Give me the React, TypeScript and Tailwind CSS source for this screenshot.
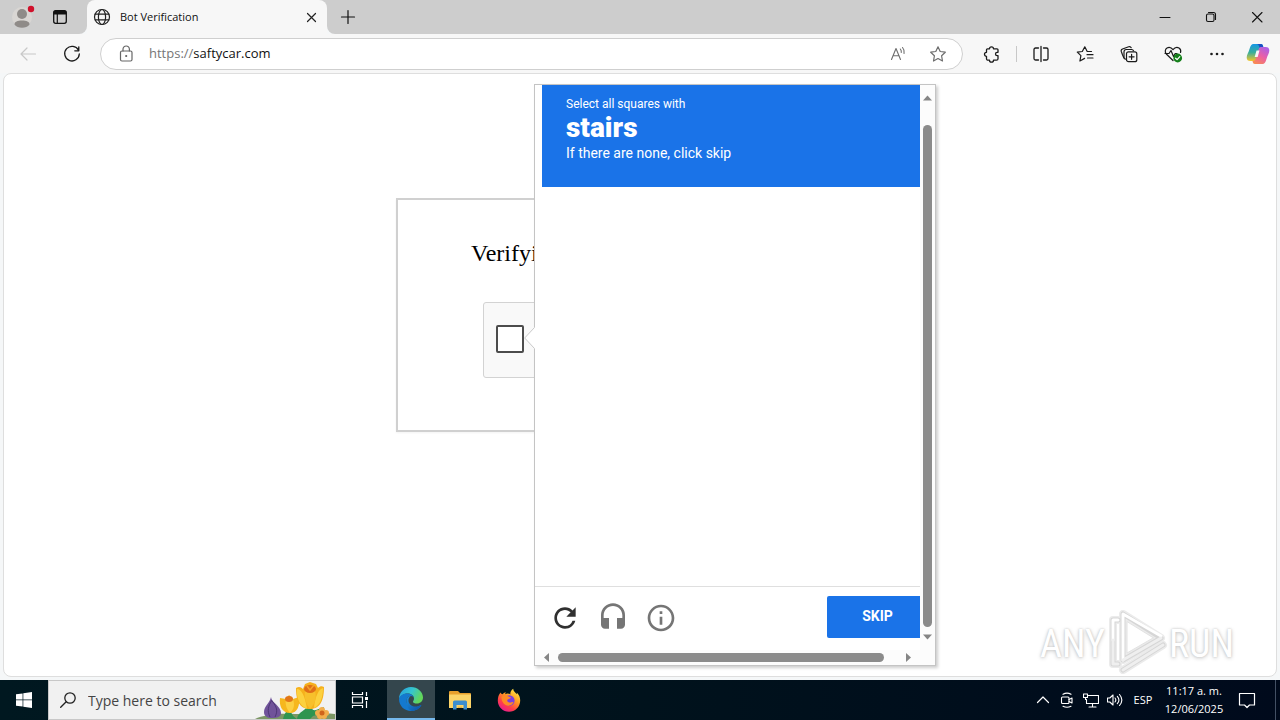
import type { ReactNode } from "react";
import { MdHeadset, MdInfoOutline, MdRefresh } from "react-icons/md";

type IconProps = { className?: string; children: ReactNode; box?: string; width?: number };

function Line({ className = "size-5", children, box = "0 0 20 20", width = 1.2 }: IconProps) {
  return (
    <svg
      className={className}
      viewBox={box}
      fill="none"
      stroke="currentColor"
      strokeWidth={width}
      strokeLinecap="round"
      strokeLinejoin="round"
      aria-hidden="true"
    >
      {children}
    </svg>
  );
}

const STAR = "M10 2.8l2.200 4.700 5.100.7-3.700 3.600.9 5.200-4.500-2.500-4.500 2.500.9-5.200-3.700-3.600 5.100-.7z";

function TabStrip() {
  return (
    <header className="flex h-[34px] shrink-0">
      <div className="flex w-[87px] shrink-0 items-center rounded-br-lg bg-[#cdcdcd] pl-3">
        <button aria-label="Profile" className="size-6">
          <svg viewBox="0 0 24 24" className="size-6">
            <circle cx="10" cy="12" r="10" fill="#d9d6d3" />
            <circle cx="10" cy="9" r="5" fill="#8f8b88" />
            <path d="M2.500 19.500c0-3 3-4 7.500-4s7.500 1 7.500 4c-1.500 2.200-4.500 3.200-7.500 3.200s-6-1-7.500-3.200z" fill="#8f8b88" />
            <circle cx="19" cy="4" r="3.200" fill="#d0112b" />
          </svg>
        </button>
        <button aria-label="Tab actions" className="ml-4 size-4 text-[#111]">
          <svg viewBox="0 0 16 16" className="size-4">
            <rect x="1.700" y="1.700" width="12.600" height="12.600" rx="2" fill="none" stroke="currentColor" strokeWidth="1.300" />
            <path d="M1.500 5.500V3.500a2 2 0 0 1 2-2h9a2 2 0 0 1 2 2v2z" fill="currentColor" />
            <path d="M5.300 5v9" stroke="currentColor" strokeWidth="1.200" />
          </svg>
        </button>
      </div>
      <div className="w-60 shrink-0 bg-linear-to-b from-[#cdcdcd] from-50% to-[#f7f7f7] to-50%">
        <div className="flex h-full items-center rounded-t-lg bg-[#f7f7f7] pr-2 pl-1.5">
          <Line className="size-[18px] text-[#222]" box="0 0 18 18" width={1.2}>
            <circle cx="9" cy="9" r="7.500" />
            <ellipse cx="9" cy="9" rx="3.600" ry="7.500" />
            <path d="M2.200 6.200h13.600M2.200 11.800h13.600" />
          </Line>
          <span className="ml-[9px] flex-1 text-[11px] text-[#111]">Bot Verification</span>
          <button aria-label="Close tab" className="flex size-4 items-center justify-center text-[#222]">
            <Line className="size-4" box="0 0 16 16">
              <path d="M4.500 4.500l8 8M12.500 4.500l-8 8" />
            </Line>
          </button>
        </div>
      </div>
      <div className="flex flex-1 items-center justify-between rounded-bl-lg bg-[#cdcdcd] pl-[11px] text-[#111]">
        <button aria-label="New tab" className="size-5">
          <Line>
            <path d="M10 3.500v13M3.500 10h13" />
          </Line>
        </button>
        <div className="flex h-full">
          <button aria-label="Minimize" className="flex w-[46px] items-center justify-center">
            <Line className="size-4" box="0 0 16 16" width={1}>
              <path d="M3 8.500h10" />
            </Line>
          </button>
          <button aria-label="Restore" className="flex w-[46px] items-center justify-center">
            <Line className="size-4" box="0 0 16 16" width={1.1}>
              <rect x="3.500" y="5" width="7.500" height="7.500" rx="1.500" />
              <path d="M5.500 3.500h5a2 2 0 0 1 2 2v5" />
            </Line>
          </button>
          <button aria-label="Close" className="flex w-[46px] items-center justify-center">
            <Line className="size-4" box="0 0 16 16" width={1.1}>
              <path d="M3.500 3.500l9.500 9.500M13 3.500L3.500 13" />
            </Line>
          </button>
        </div>
      </div>
    </header>
  );
}

function ToolButton({ label, children }: { label: string; children: ReactNode }) {
  return (
    <button aria-label={label} className="flex w-11 items-center justify-center">
      {children}
    </button>
  );
}

function Toolbar() {
  return (
    <div className="flex h-[39px] shrink-0 items-center bg-[#f7f7f7] text-[#1b1b1b]">
      <button aria-label="Back" className="ml-[18px] size-5 text-[#c8c8c8]" disabled>
        <Line>
          <path d="M17.500 10H3M9 4l-6 6 6 6" />
        </Line>
      </button>
      <button aria-label="Refresh" className="ml-6 size-5">
        <Line width={1.3}>
          <path d="M16.500 6.300A7.300 7.300 0 1 0 17.300 10M16.800 2.800v4h-4" />
        </Line>
      </button>
      <div className="ml-[18px] flex h-8 flex-1 items-center rounded-full border border-[#cfcfcf] bg-white pr-3.5 pl-[15px]">
        <Line className="size-5 text-[#666]">
          <rect x="4.500" y="7" width="11.500" height="10" rx="1.500" />
          <path d="M7 7V5.200a3.200 3.200 0 0 1 6.400 0V7" />
          <circle cx="10.200" cy="12" r=".5" fill="currentColor" />
        </Line>
        <label htmlFor="address" className="ml-[13px] text-[13px] text-[#767676]">
          https://
        </label>
        <input
          id="address"
          defaultValue="saftycar.com"
          className="min-w-0 flex-1 bg-transparent text-[13px] text-[#111] outline-none"
        />
        <button aria-label="Read aloud" className="size-5 text-[#6e6e6e]">
          <Line width={1.1}>
            <path d="M3.500 15.500L8 4.500l4.500 11M5 11.700h6M12.300 5c.9 1.100 1.200 2.200 1 3.500M14.500 3.500c1.600 1.800 2.100 3.800 1.600 6" />
          </Line>
        </button>
        <button aria-label="Add to favorites" className="ml-5 size-5 text-[#6e6e6e]">
          <Line>
            <path d={STAR} />
          </Line>
        </button>
      </div>
      <div className="ml-[7px] flex h-8 shrink-0 items-center">
        <ToolButton label="Extensions">
          <Line width={1.3}>
            <path d="M7.500 4.800a2 2 0 0 1 4 0H15a1 1 0 0 1 1 1v2.500h-.8a1.700 1.700 0 0 0 0 3.400h.8v3a1.500 1.500 0 0 1-1.500 1.500h-3a2 2 0 0 1-4 0H6a1.500 1.500 0 0 1-1.500-1.500V12.300a2 2 0 0 1 0-4V5.800a1 1 0 0 1 1-1z" />
          </Line>
        </ToolButton>
        <span className="mx-0.5 h-4 w-px bg-[#c8c8c8]" />
        <ToolButton label="Split screen">
          <Line width={1.3}>
            <path d="M7.500 4H4.500A1.500 1.500 0 0 0 3 5.500v9A1.500 1.500 0 0 0 4.500 16h3M12.500 4h3A1.500 1.500 0 0 1 17 5.500v9a1.500 1.500 0 0 1-1.500 1.500h-3M10 2.500v15" />
          </Line>
        </ToolButton>
        <ToolButton label="Favorites">
          <Line width={1.2}>
            <path d="M16.500 7.500h-4.300L9.800 2.800 7.300 7.500l-5 .6 3.600 3.600-1 5.300 4.700-2.600M12 10.700h6M12.500 14h5.500" />
          </Line>
        </ToolButton>
        <ToolButton label="Collections">
          <Line width={1.2}>
            <path d="M4.800 13.800l-1.300-3L2.300 7.500A2 2 0 0 1 3.500 5l6.200-2.300a2 2 0 0 1 2.500 1" />
            <path d="M6.500 15.200A2 2 0 0 1 5 13.200V7.800a2.300 2.300 0 0 1 2.300-2.300h5.200a2 2 0 0 1 2 1.200" />
            <rect x="7.500" y="7.800" width="10.300" height="9.900" rx="2" />
            <path d="M12.600 10.300v5M10.100 12.800h5" />
          </Line>
        </ToolButton>
        <ToolButton label="Browser essentials">
          <Line width={1.2}>
            <path d="M10 16.500L3.300 10C1.700 8 2 5.200 4 4c2.200-1.200 4.500-.3 6 1.700 1.500-2 4-2.900 6-1.700 1.500 1 2 3 1.500 4.500" />
            <path d="M2 9.500h4l2-3 2.500 6 1.700-3H14" />
            <circle cx="14.700" cy="14" r="4.400" fill="#15801b" stroke="none" />
            <path d="M12.600 14.200l1.500 1.400 2.700-2.900" stroke="#fff" />
          </Line>
        </ToolButton>
        <ToolButton label="Settings and more">
          <svg viewBox="0 0 20 20" className="size-5" fill="currentColor">
            <circle cx="4.500" cy="10" r="1.300" />
            <circle cx="10" cy="10" r="1.300" />
            <circle cx="15.500" cy="10" r="1.300" />
          </svg>
        </ToolButton>
        <button aria-label="Copilot" className="mr-2.5 ml-[7px] size-6">
          <svg viewBox="0 0 24 24" className="size-6">
            <defs>
              <linearGradient id="cpBlue" x1="0" y1="0" x2="0" y2="1">
                <stop offset="0" stopColor="#1497e6" />
                <stop offset=".5" stopColor="#3aae9a" />
                <stop offset="1" stopColor="#f4c62a" />
              </linearGradient>
              <linearGradient id="cpPink" x1=".8" y1="0" x2=".2" y2="1">
                <stop offset="0" stopColor="#a860e8" />
                <stop offset=".5" stopColor="#ea5fa6" />
                <stop offset="1" stopColor="#f98a52" />
              </linearGradient>
            </defs>
            <path d="M15 2H7.500C5.500 2 4.500 3.500 3.500 7c-.9 3.400-2.800 6-2.800 8.500C.7 18 2 19 4.500 19H9c1.500 0 2-1 2.600-3l2-7c.6-2 1.400-3 3.900-3C17 3.500 16.800 2 15 2z" fill="url(#cpBlue)" />
            <path d="M9 22h7.500c2 0 3-1.500 4-5 .9-3.400 2.800-6 2.800-8.500C23.300 6 22 5 19.500 5H15c-1.500 0-2 1-2.600 3l-2 7c-.6 2-1.400 4-3.900 4 .5 2 .7 3 2.500 3z" fill="url(#cpPink)" />
            <path d="M15 2h-4.500c1.800 0 2.500 1.800 3 3.600.5-.5 1-.6 1.800-.6h2C16.800 3 16.300 2 15 2z" fill="#1b4fc4" />
            <path d="M10.500 8.500h3L11.700 15H8.700z" fill="#f7f7f7" />
          </svg>
        </button>
      </div>
    </div>
  );
}

function Challenge() {
  return (
    <section
      aria-label="Image challenge"
      className="absolute top-2.5 left-1/2 -ml-[106px] flex h-[582px] w-[402px] flex-col border border-[#c4c4c4] bg-white font-[Roboto,sans-serif] shadow-[2px_2px_3px_rgba(0,0,0,0.2)]"
    >
      <svg className="absolute top-[242px] -left-[11px] h-[22px] w-[11px]" viewBox="0 0 11 22" aria-hidden="true">
        <path d="M11 0L.7 11 11 22z" fill="#fff" />
        <path d="M10.500 .500L.7 11l9.800 10.500" fill="none" stroke="#c8c8c8" />
      </svg>
      <div className="flex min-h-0 flex-1">
        <div className="flex min-w-0 flex-1 flex-col overflow-hidden">
          <div className="ml-[7px] h-[102px] bg-[#1a73e8] pt-[11px] pl-6 text-white">
            <p className="text-[12px] leading-4">Select all squares with</p>
            <h1 className="text-[28px] leading-8 font-black">stairs</h1>
            <p className="text-[14px] leading-[18px]">If there are none, click skip</p>
          </div>
          <div className="flex-1" />
          <div className="flex h-16 items-center border-t border-[#dfdfdf] pb-1 pl-3.5">
            <div className="flex gap-4 pt-0.5 text-[#757575]">
              <button aria-label="New challenge" className="text-[#303030]">
                <MdRefresh className="size-8" />
              </button>
              <button aria-label="Audio challenge">
                <MdHeadset className="size-8" />
              </button>
              <button aria-label="Help">
                <MdInfoOutline className="size-8" />
              </button>
            </div>
            <button className="-mr-2 ml-auto h-[42px] w-[101px] shrink-0 rounded-xs bg-[#1a73e8] text-[14px] font-bold text-white">
              SKIP
            </button>
          </div>
        </div>
        <div className="flex w-[15px] shrink-0 flex-col items-center bg-[#fcfcfc] py-2.5">
          <svg viewBox="0 0 9 6" className="h-1.5 w-[9px]" fill="#858585"><path d="M0 5.500L4.500 .500 9 5.500z" /></svg>
          <div className="mt-6 mb-[7px] w-[9px] flex-1 rounded-full bg-[#8b8b8b]" />
          <svg viewBox="0 0 9 6" className="h-1.5 w-[9px]" fill="#858585"><path d="M0 .500h9L4.500 5.500z" /></svg>
        </div>
      </div>
      <div className="flex h-[15px] shrink-0 items-center bg-[#fcfcfc] pr-6 pl-[9px]">
        <svg viewBox="0 0 6 9" className="h-[9px] w-1.5" fill="#858585"><path d="M5 0v9L0 4.500z" /></svg>
        <div className="mr-[21px] ml-2 h-[9px] flex-1 rounded-full bg-[#8b8b8b]" />
        <svg viewBox="0 0 6 9" className="h-[9px] w-1.5" fill="#858585"><path d="M1 0v9l5-4.500z" /></svg>
      </div>
    </section>
  );
}

function Watermark() {
  const word = "pt-1 text-[38px] leading-10 text-white [text-shadow:0_0_2px_#c4c4c4,0_1px_4px_#c8c8c8]";
  return (
    <div className="pointer-events-none absolute right-[42px] bottom-0.5 flex items-center font-['Liberation_Sans_Narrow','Roboto_Condensed','Liberation_Sans',sans-serif]">
      <span className={word}>ANY</span>
      <svg viewBox="0 0 64 64" className="h-16 w-16" fill="none" strokeLinejoin="round" strokeLinecap="round" aria-hidden="true">
        <g stroke="#ebebeb" strokeWidth="8">
          <path d="M18 4v46l38-22z" />
          <path d="M13 10H8v44h5M18 60l40-25" />
        </g>
        <g stroke="#d6d6d6" strokeWidth="5">
          <path d="M18 4v46l38-22z" />
          <path d="M13 10H8v44h5M18 60l40-25" />
        </g>
        <g stroke="#fff" strokeWidth="3">
          <path d="M18 50V4l38 22" />
          <path d="M13 10H8v20" />
        </g>
        <g stroke="#efefef" strokeWidth="3">
          <path d="M18 50l38-22M8 30v24h5M18 60l40-25" />
        </g>
        <path d="M22 12v31l26-15z" fill="#fff" stroke="#e2e2e2" />
      </svg>
      <span className={word}>RUN</span>
    </div>
  );
}

function Page() {
  return (
    <main className="relative mx-[3px] mb-[3px] flex-1 overflow-hidden rounded-lg border border-[#dedede] bg-white">
      <div className="mx-auto mt-[124px] h-[234px] w-[488px] border-2 border-[#d0d0d0] bg-white pt-[37px] shadow-xs">
        <p className="pl-[73px] font-['Liberation_Serif',serif] text-[24px] leading-8 text-black">Verifying</p>
        <div className="mt-[33px] ml-[85px] flex h-[76px] w-[304px] items-start rounded-[3px] border border-[#d3d3d3] bg-[#f9f9f9] pt-[22px] pl-3">
          <input
            type="checkbox"
            aria-label="Verification"
            className="size-7 appearance-none rounded-xs border-2 border-[#4c4c4c] bg-white"
          />
        </div>
      </div>
      <Challenge />
      <Watermark />
    </main>
  );
}

function SpringFlowers() {
  return (
    <svg viewBox="0 0 80 38" className="h-[38px] w-20 shrink-0" aria-hidden="true">
      <path d="M0 38c8-4 22-6 40-5 18 0 30-1 40 0v5z" fill="#7c9765" />
      <path d="M28 38c1-4 2-6 4-8l4 1c1 3 3 5 6 7zM42 38c1-7 6-7 10-12l5 1c1 4 4 2 12-1-2 6-6 8-11 9l-3 3z" fill="#2f9450" />
      <path d="M16 16c0 5 10 9 10 16 0 4-4 5-9 5-5 0-8-2-8-6 0-6 6-9 7-15z" fill="#70539a" />
      <path d="M17 19c-4 6-5 11-2 17M17 20c5 6 6 10 3 16" stroke="#4d3775" fill="none" />
      <path d="M25 17l6 1 3-4 4 4 6-2c1 8-1 16-9 16s-11-7-10-15z" fill="#f6b71e" />
      <path d="M31 18c-1 5 0 9 4 14 4-4 5-8 3-14l-4-3z" fill="#fccf42" />
      <ellipse cx="34" cy="18" rx="4" ry="3" fill="#e27619" />
      <path d="M41 7c3-2 5-1 7 1l2-5 5-2 6 2 2 4c2-2 4-2 6-1 0 12-3 22-14 22S41 19 41 7z" fill="#f6b11c" />
      <path d="M42 8c4 0 8 6 10 20-6-3-11-9-10-20zM68 7c-4 1-8 8-9 20 6-3 9-10 9-20z" fill="#fcd13f" />
      <path d="M50 10c-1 7 1 13 5 18 5-5 7-11 5-18l-5-2z" fill="#f7c02c" />
      <ellipse cx="55" cy="8" rx="6" ry="4" fill="#e06e17" />
      <path d="M52 5l3 4 4-5" stroke="#f5a12a" strokeWidth="1.500" fill="none" />
      <g fill="#f2ae4c">
        <circle cx="67" cy="29" r="3" /><circle cx="63" cy="32" r="3" /><circle cx="71" cy="32" r="3" /><circle cx="65" cy="35" r="3" /><circle cx="69" cy="35" r="3" />
      </g>
      <circle cx="67" cy="32" r="2.500" fill="#cf641c" />
    </svg>
  );
}

function Taskbar() {
  return (
    <footer className="flex h-10 shrink-0 items-center bg-linear-to-r from-[#001820] via-[#00121c] to-[#000a1c] text-white">
      <button aria-label="Start" className="flex h-10 w-12 items-center justify-center">
        <svg viewBox="0 0 16 16" className="size-4" fill="#fff">
          <path d="M0 2.300l6.600-.9v6.200H0zM7.300 1.300L16 0v7.600H7.300zM0 8.300h6.600v6.300L0 13.700zM7.300 8.300H16V16l-8.700-1.300z" />
        </svg>
      </button>
      <div className="flex h-10 w-72 items-center border border-[#c8c8c8] bg-[#f1f1f1] pl-[11px] text-[#222]">
        <Line className="size-4 shrink-0" box="0 0 16 16" width={1.3}>
          <circle cx="10" cy="6" r="5.200" />
          <path d="M6.200 9.800L.7 15.300" />
        </Line>
        <input
          aria-label="Search"
          placeholder="Type here to search"
          className="ml-3 min-w-0 flex-1 bg-transparent text-[14px] outline-none placeholder:text-[#444]"
        />
        <SpringFlowers />
      </div>
      <button aria-label="Task view" className="flex h-10 w-12 items-center justify-center">
        <svg viewBox="0 0 18 16" className="h-4 w-[18px]" fill="none" stroke="#fff" strokeWidth="1.200">
          <path d="M1.500 0v2.500h10V0M1.500 16v-2.500h10V16M1.500 5h10v6h-10zM15.500 0v4M15.500 9v7" />
          <path d="M14 5h3v3h-3z" fill="#fff" stroke="none" />
        </svg>
      </button>
      <button aria-label="Microsoft Edge" className="ml-[3px] flex h-10 w-12 items-center justify-center border-b-2 border-[#76b9ed] bg-[#34464d]">
        <svg viewBox="0 0 24 24" className="size-6">
          <defs>
            <linearGradient id="edTop" x1="0" y1="0" x2="1" y2=".4">
              <stop offset="0" stopColor="#259be0" />
              <stop offset=".55" stopColor="#35c5cf" />
              <stop offset="1" stopColor="#62d65a" />
            </linearGradient>
            <linearGradient id="edLow" x1="0" y1="0" x2="1" y2="1">
              <stop offset="0" stopColor="#1d8fdd" />
              <stop offset="1" stopColor="#0b4ea2" />
            </linearGradient>
          </defs>
          <path d="M0 12C0 5 5.500 0 12 0s12 5 12 10.500c0 3.800-2.900 6-6 6-2.500 0-4-.9-4-1.800 0-.7 1-1.200 1-3.200C15 8.500 12 6.500 8.500 6.500 4.500 6.500 1 9 0 12z" fill="url(#edTop)" />
          <path d="M0 12c.8-3.600 4.500-5.500 8-5.500 3.500 0 6 1.700 6.800 3.500-1-.7-2-.9-3-.9-2.800 0-4.300 2.500-4.300 4.900 0 4.500 4.500 7 8.500 6.500 2.500-.3 4.500-1.500 5.700-2.500.4-.3.800 0 .5.500C20.500 21.500 16.500 24 12 24 5.500 24 0 19 0 12z" fill="#1479cf" />
          <path d="M7.500 14c0-2.400 1.500-4.900 4.300-4.900-1.600 1-2.300 2.600-2.300 4.400 0 3.500 3.500 6.700 8 6 1.500-.2 3-.8 4.200-1.500.4-.3.800 0 .5.500C20.500 21.500 16.500 24 12.500 24 8.500 22.500 7.500 17.500 7.500 14z" fill="url(#edLow)" />
        </svg>
      </button>
      <button aria-label="File Explorer" className="flex h-10 w-[50px] items-center justify-center">
        <svg viewBox="0 0 22 20" className="h-5 w-[22px]">
          <path d="M0 2a1 1 0 0 1 1-1h8l2 2h10a1 1 0 0 1 1 1v14H0z" fill="#e8a02c" />
          <path d="M0 4.500h22V18H0z" fill="#fcd468" />
          <path d="M4 19.500V12a1.500 1.500 0 0 1 1.500-1.500h11A1.500 1.500 0 0 1 18 12v7.500h-3.500V15h-7v4.500z" fill="#3b8ed0" />
          <path d="M9 16.500h4V18H9z" fill="#e8b64a" />
        </svg>
      </button>
      <button aria-label="Firefox" className="flex h-10 w-12 items-center justify-center">
        <svg viewBox="0 0 24 24" className="size-6">
          <defs>
            <linearGradient id="fx" x1=".85" y1="0" x2=".2" y2="1">
              <stop offset="0" stopColor="#fff04a" />
              <stop offset=".4" stopColor="#ff9a22" />
              <stop offset=".7" stopColor="#ff3e47" />
              <stop offset="1" stopColor="#e5159c" />
            </linearGradient>
          </defs>
          <path d="M3.500 4.500C4 5.500 4.700 6 5.600 6.200 6.500 5 8 4.300 9.200 4.200c-.8.7-1 1.300-1 2 1.800-1 4-.7 5.200.3C13 4.500 14 2 16.200.7c0 2.500 2.300 3.500 3.500 5.500.2-.6.200-1 0-1.700 2.300 2 3.500 4.800 3.500 8C23.200 19 18 23.800 12 23.800S.8 19 .8 12.800c0-3.500 1-6.300 2.700-8.300z" fill="url(#fx)" />
          <circle cx="12.300" cy="12.500" r="5.300" fill="#7a3fe0" />
          <path d="M4.500 9c2-2.200 4.500-2 6.500-.8 1.300.8 2.800.7 2.800 1.400 0 1.200-2.300 1.300-3.300 2.200-.8.800.2 2.500 2 2.800 2 .2 2.700-1 4-.5-1 3-4 4.200-6.700 3.300C6.500 16.500 4.500 13 4.500 9z" fill="#ff8a24" />
        </svg>
      </button>
      <div className="ml-auto flex h-10 items-center">
        <button aria-label="Show hidden icons" className="size-4">
          <Line className="size-4" box="0 0 16 16"><path d="M2.500 10.500L8 5l5.500 5.500" /></Line>
        </button>
        <button aria-label="Meet Now" className="ml-2 size-4">
          <Line className="size-4" box="0 0 16 16" width={1.1}>
            <rect x="2.500" y="5" width="7.500" height="6.500" rx="1" />
            <path d="M10 7.500l3-1.500v5l-3-1.500M4 2.300c2.500-1.500 5.500-1.500 8 0M4 14.200c2.500 1.300 5.500 1.300 8 0" />
          </Line>
        </button>
        <button aria-label="Network" className="ml-2 size-4">
          <Line className="size-4" box="0 0 16 16" width={1.1}>
            <path d="M5.500 3.500h10v8h-12V7.500M9.500 11.500V15M6 15h7M.5 2h4v3.500h-4zM2.500 5.500v2h1" />
          </Line>
        </button>
        <button aria-label="Volume" className="ml-2 size-4">
          <Line className="size-4" box="0 0 16 16" width={1.1}>
            <path d="M.5 6h2.300L6 3v10L2.800 10H.5zM8 6c1 1.200 1 2.800 0 4M10.300 4.300c2 2.300 2 5.200 0 7.400M12.500 2.500c3 3.500 3 7.500 0 11" />
          </Line>
        </button>
        <button className="ml-2 w-6 text-[11px]">ESP</button>
        <div className="ml-[5px] w-[68px] text-center text-[11px] leading-[18px] whitespace-nowrap">
          <p>11:17 a. m.</p>
          <p>12/06/2025</p>
        </div>
        <button aria-label="Notifications" className="mr-[19px] ml-2.5 size-[18px]">
          <Line className="size-[18px]" box="0 0 18 18">
            <path d="M1.500 2.500h15v11.500H11.500L9 16.500 6.500 14h-5z" />
          </Line>
        </button>
        <div className="mr-1 h-10 w-px bg-[#435064]" />
      </div>
    </footer>
  );
}

export default function App() {
  return (
    <div className="flex h-screen flex-col bg-[#f5f7f8] font-['Open_Sans',sans-serif]">
      <TabStrip />
      <Toolbar />
      <Page />
      <Taskbar />
    </div>
  );
}
